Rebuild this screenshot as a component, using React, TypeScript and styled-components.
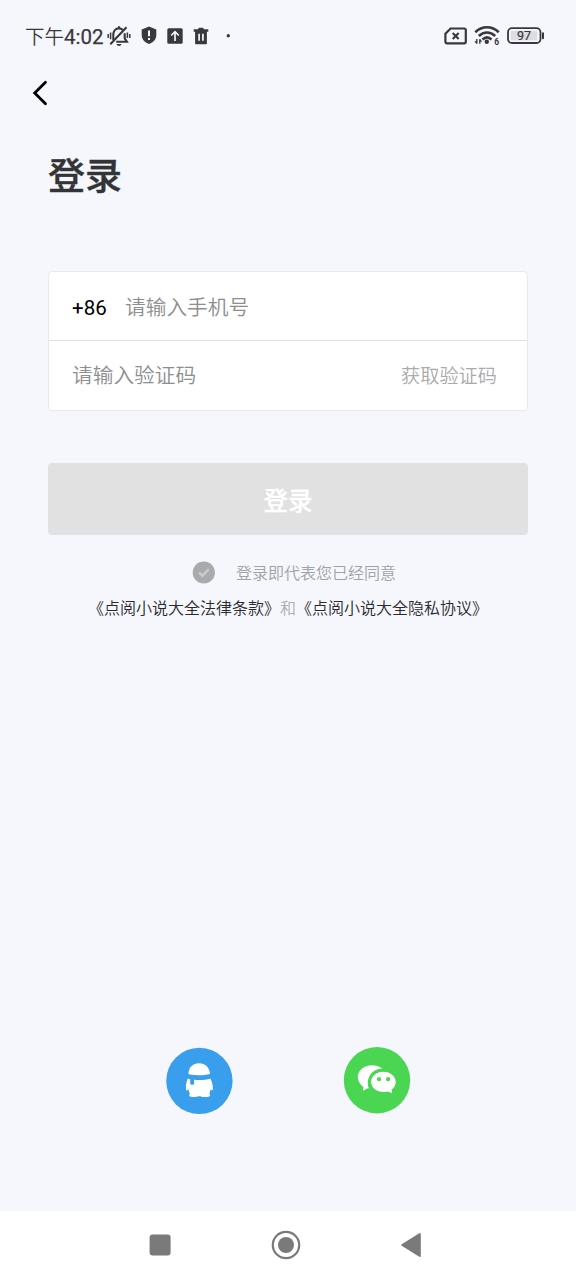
import React from 'react';
import styled, { createGlobalStyle } from 'styled-components';

const GlobalStyle = createGlobalStyle`
  * { box-sizing: border-box; }
  body { margin: 0; background: #f5f7fc; }
  button, input { font: inherit; border: 0; padding: 0; background: none; }
`;

const Screen = styled.div`
  width: 576px;
  height: 1280px;
  display: flex;
  flex-direction: column;
  overflow: hidden;
  background: #f5f7fc;
  font-family: Roboto, 'Noto Sans CJK SC', sans-serif;
  color: #333;
`;

const StatusBar = styled.header`
  height: 71px;
  flex: none;
  display: flex;
  align-items: center;
  justify-content: space-between;
  padding: 0 31px 0 25px;
  color: #38393c;
  svg { display: block; flex: none; }
`;

const StatusGroup = styled.div<{ $gap: number }>`
  display: flex;
  align-items: center;
  gap: ${(p) => p.$gap}px;
`;

const Clock = styled.span`
  display: flex;
  align-items: center;
  font-size: 20.5px;
  line-height: 24px;
  font-weight: 400;
  -webkit-text-stroke: 0.25px currentColor;
  white-space: nowrap;
  width: 82px;
  padding-top: 2px;
  margin-right: -10px;
`;

const Meridiem = styled.span`
  font-family: 'Noto Sans CJK SC', sans-serif;
  font-size: 19.5px;
  line-height: 22px;
  padding-bottom: 2px;
  font-weight: 350;
  -webkit-text-stroke: 0;
`;

const NavBar = styled.nav`
  height: 44px;
  flex: none;
  display: flex;
  align-items: center;
  padding-left: 30px;
`;

const BackButton = styled.button`
  width: 20px;
  height: 28px;
  svg { display: block; }
`;

const Main = styled.main`
  flex: 1;
  display: flex;
  flex-direction: column;
  padding: 36px 48px 0;
`;

const Title = styled.h1`
  margin: 0 0 66px;
  font-size: 37px;
  line-height: 54px;
  font-weight: 500;
  -webkit-text-stroke: 0.4px currentColor;
  color: #333436;
`;

const Form = styled.form`
  flex: none;
  height: 140px;
  border: 1px solid #e8e9ec;
  border-radius: 4px;
  background: #fff;
`;

const Field = styled.div<{ $divided?: boolean }>`
  height: 69px;
  display: flex;
  align-items: center;
  padding: 0 30px 0 23px;
  border-bottom: ${(p) => (p.$divided ? '1px solid #dedede' : '0')};
`;

const CountryCode = styled.span`
  width: 53px;
  font-size: 20.5px;
  line-height: 30px;
  padding-top: 4px;
  color: #000;
`;

const Input = styled.input<{ $raised?: boolean }>`
  flex: 1;
  min-width: 0;
  height: 36px;
  outline: 0;
  margin-bottom: ${(p) => (p.$raised ? 4 : 0)}px;
  font-family: 'Noto Sans CJK SC', sans-serif;
  font-size: 20.7px;
  font-weight: 350;
  &::placeholder { color: #8e8e8e; opacity: 1; }
`;

const CodeButton = styled.button`
  margin-bottom: 2px;
  font-family: 'Noto Sans CJK SC', sans-serif;
  font-size: 19.2px;
  font-weight: 350;
  line-height: 30px;
  color: #aaa;
`;

const Submit = styled.button`
  flex: none;
  height: 72px;
  margin-top: 52px;
  border-radius: 4px;
  background: #e1e1e1;
  color: #fff;
  font-size: 24.5px;
  font-weight: 500;
  -webkit-text-stroke: 0.3px currentColor;
`;

const Consent = styled.div`
  display: flex;
  align-items: center;
  gap: 21px;
  height: 24px;
  margin: 25px 0 0 144px;
  font-family: 'Noto Sans CJK SC', sans-serif;
  font-size: 16px;
  font-weight: 350;
  color: #a0a2a6;
`;

const Terms = styled.p`
  margin: 11px 0 0;
  text-align: center;
  font-family: 'Noto Sans CJK SC', sans-serif;
  font-size: 16px;
  line-height: 24px;
  font-weight: 350;
  white-space: nowrap;
  color: #acaeb2;
`;

const TermsLink = styled.a`
  color: #292a2d;
`;

const Socials = styled.div`
  display: flex;
  justify-content: center;
  gap: 110px;
  margin: auto 0 96px;
`;

const SocialButton = styled.button`
  width: 68px;
  height: 68px;
  svg { display: block; }
`;

const SystemNav = styled.footer`
  flex: none;
  height: 69px;
  display: flex;
  align-items: center;
  justify-content: space-between;
  padding: 0 154px 1px 149px;
  background: #fff;
  color: #7a7a7a;
  svg { display: block; }
`;

const MutedBell = () => (
  <svg width="24" height="22" viewBox="0 0 24 22" fill="none" stroke="currentColor" strokeWidth="2.1">
    <path d="M6.3 15V9.6c0-3.6 2.2-6.2 5.7-6.2 1.5 0 2.8.5 3.8 1.5M17.7 8.2v5.2l2.2 3.3H9.2" />
    <path d="M12 1.2v2M3.3 19.2 19.5 2.2" />
    <path d="M9.5 19h5c-.3 1.3-1.3 2-2.5 2s-2.2-.7-2.5-2Z" fill="currentColor" stroke="none" />
    <path d="M1.2 9v4M3.6 7.5v6.8M20.4 7.5v5.5M22.8 9v4" strokeWidth="1.5" />
  </svg>
);

const ShieldAlert = () => (
  <svg width="16" height="20" viewBox="0 0 16 20">
    <path d="M8 .5 15.3 3.4v5.7c0 4.1-2.8 7.3-7.3 9-4.5-1.7-7.3-4.9-7.3-9V3.4Z" fill="currentColor" />
    <path d="M8 4.5v5.7M8 11.9v2.2" stroke="#f5f7fc" strokeWidth="2" />
  </svg>
);

const UploadBox = () => (
  <svg width="16" height="16" viewBox="0 0 16 16">
    <rect x=".3" y=".3" width="15.4" height="15.4" rx="1.5" fill="currentColor" />
    <path d="M8 13V4M4.2 7.5 8 3.7l3.8 3.8" stroke="#f5f7fc" strokeWidth="1.7" fill="none" />
  </svg>
);

const Trash = () => (
  <svg width="16" height="18" viewBox="0 0 16 18">
    <path d="M.7 2.3h4.2L6 .8h4l1.1 1.5h4.2v2.4h-1.4v11.8c0 .5-.3.8-.8.8H2.9c-.5 0-.8-.3-.8-.8V4.7H.7Z" fill="currentColor" />
    <path d="M6.1 6.8v7M9.9 6.8v7" stroke="#f5f7fc" strokeWidth="1.7" />
  </svg>
);

const DotIcon = styled.svg`
  margin-left: 7px;
`;

const Dot = () => (
  <DotIcon width="4" height="4" viewBox="0 0 4 4"><circle cx="2.3" cy="1.8" r="1.7" fill="currentColor" /></DotIcon>
);

const NoSim = () => (
  <svg width="23" height="18" viewBox="0 0 23 18" fill="none" stroke="currentColor" strokeWidth="2.2">
    <path d="M6.6 1.5h13.6c1 0 1.6.6 1.6 1.5v11.8c0 .9-.6 1.5-1.6 1.5H3c-1 0-1.6-.6-1.6-1.5V6.7Z" />
    <path d="m8.7 6 6 6M14.7 6l-6 6" strokeWidth="2.1" />
  </svg>
);

const Wifi = () => (
  <svg width="26" height="21" viewBox="0 0 26 21">
    <g fill="none" stroke="currentColor" strokeWidth="2.7">
      <path d="M1.3 7.2c6.8-6.6 16.6-6.6 23.4 0M4.8 11c4.9-4.7 11.5-4.7 16.4 0M8.5 14.5c2.8-2.6 6.2-2.6 9 0" />
    </g>
    <circle cx="12.8" cy="16.8" r="2.2" fill="currentColor" />
    <path d="M2.8 14v4.5M5.8 18.8v-4.5" stroke="currentColor" strokeWidth="1.4" />
    <path d="m.3 16.2 2.5 3.1v-3.1ZM8.3 16.6l-2.5-2.9v2.9Z" fill="currentColor" />
    <text x="20.3" y="20" fontSize="8.5" fontWeight="700" fontFamily="Roboto, sans-serif" fill="currentColor">6</text>
  </svg>
);

const Battery = () => (
  <svg width="38" height="18" viewBox="0 0 38 18">
    <rect x="1" y="1.2" width="32.5" height="14.8" rx="4" fill="none" stroke="currentColor" strokeWidth="1.8" />
    <rect x="3.7" y="3.7" width="26.5" height="9.8" rx="1.5" fill="#dcdde1" />
    <path d="M36 6.2v5" stroke="currentColor" strokeWidth="2" strokeLinecap="round" />
    <text x="17" y="13" textAnchor="middle" fontSize="12.5" fontWeight="400" stroke="currentColor" strokeWidth=".2" fontFamily="Roboto, sans-serif" fill="currentColor">97</text>
  </svg>
);

const CheckCircle = () => (
  <svg width="23" height="23" viewBox="0 0 23 23">
    <circle cx="11.8" cy="11.5" r="11.1" fill="#a9aaac" />
    <path d="m7 11.3 3.4 3.4 6.3-6.3" fill="none" stroke="#c9cacc" strokeWidth="2.5" />
  </svg>
);

const QQ = () => (
  <svg width="68" height="68" viewBox="0 0 68 68">
    <circle cx="34.4" cy="33.9" r="33.2" fill="#399eeb" />
    <path d="M23.5 27.2C23.3 20.6 27.8 16.2 34.1 16.2S44.9 20.8 44.9 27c-6.7 1.7-14.5 1.7-21.4.2Z" fill="#fff" />
    <path d="M22.7 31.6l2.5.6v4.5c.5 1.5 3.4 1.5 3.9 0V32.8c5.4.6 11.3.3 16.5-1 1.6 3.8 2.5 7.3 2.2 10.2-.2 1.8-1.1 2-2.3.2-.4 1.8-.6 3-1.1 4.3 1.2 1 .9 3.2-1.7 3.4-2.7.2-5.6.2-7.3-.7h-1.7c-2 .9-5.7.9-8 .5-1.9-.4-1.7-2.1-.8-3-.7-1.4-1.3-2.9-1.6-4.6-1.1 1.9-2.1 1.7-2.3-.2-.4-3.6.6-7 1.7-10.3Z" fill="#fff" />
  </svg>
);

const WeChat = () => (
  <svg width="68" height="68" viewBox="0 0 68 68">
    <circle cx="34" cy="33.2" r="33.2" fill="#4ad552" />
    <path d="M39.3 21.4C36.1 19 32.3 18.2 28.8 18.2c-8 0-14 5.3-14 11.9 0 4.1 2.1 7.4 5.6 9.9l-.4 3.7 4.8-2.4 1.1.1C22.4 32.2 28 21.8 39.3 21.4Z" fill="#fff" />
    <path d="M40.4 24.8c6.9 0 12.3 4.5 12.3 10.1 0 3.2-1.7 6.1-4.2 7.9l.6 3.4-4.2-1.8c-9 2.1-16.8-2.7-16.8-9.5 0-5.6 5.4-10.1 12.3-10.1Z" fill="#fff" />
    <circle cx="36" cy="32.2" r="2.1" fill="#4ad552" />
    <circle cx="45.1" cy="32.2" r="2.1" fill="#4ad552" />
  </svg>
);

export default function App() {
  return (
    <Screen>
      <GlobalStyle />
      <StatusBar>
        <StatusGroup $gap={10}>
          <Clock><Meridiem>下午</Meridiem>4:02</Clock>
          <MutedBell />
          <ShieldAlert />
          <UploadBox />
          <Trash />
          <Dot />
        </StatusGroup>
        <StatusGroup $gap={7}>
          <NoSim />
          <Wifi />
          <Battery />
        </StatusGroup>
      </StatusBar>
      <NavBar>
        <BackButton type="button" aria-label="返回">
          <svg width="20" height="28" viewBox="0 0 20 28" fill="none" stroke="#000" strokeWidth="2.8" strokeLinecap="round" strokeLinejoin="miter">
            <path d="M15.5 3.2 4.7 14l10.8 10.8" />
          </svg>
        </BackButton>
      </NavBar>
      <Main>
        <Title>登录</Title>
        <Form>
          <Field $divided>
            <CountryCode>+86</CountryCode>
            <Input placeholder="请输入手机号" />
          </Field>
          <Field>
            <Input $raised placeholder="请输入验证码" />
            <CodeButton type="button">获取验证码</CodeButton>
          </Field>
        </Form>
        <Submit type="button">登录</Submit>
        <Consent>
          <CheckCircle />
          <span>登录即代表您已经同意</span>
        </Consent>
        <Terms>
          <TermsLink>《点阅小说大全法律条款》</TermsLink>和<TermsLink>《点阅小说大全隐私协议》</TermsLink>
        </Terms>
        <Socials>
          <SocialButton type="button" aria-label="QQ"><QQ /></SocialButton>
          <SocialButton type="button" aria-label="微信"><WeChat /></SocialButton>
        </Socials>
      </Main>
      <SystemNav>
        <svg width="22" height="22" viewBox="0 0 22 22"><rect x=".6" y=".6" width="21" height="21" rx="3" fill="currentColor" /></svg>
        <svg width="30" height="30" viewBox="0 0 30 30">
          <circle cx="15" cy="15" r="13.2" fill="none" stroke="currentColor" strokeWidth="2.2" />
          <circle cx="15" cy="15" r="8" fill="currentColor" />
        </svg>
        <svg width="22" height="26" viewBox="0 0 22 26"><path d="M2.2 13 19.8 2v22Z" fill="currentColor" stroke="currentColor" strokeWidth="2" strokeLinejoin="round" /></svg>
      </SystemNav>
    </Screen>
  );
}
